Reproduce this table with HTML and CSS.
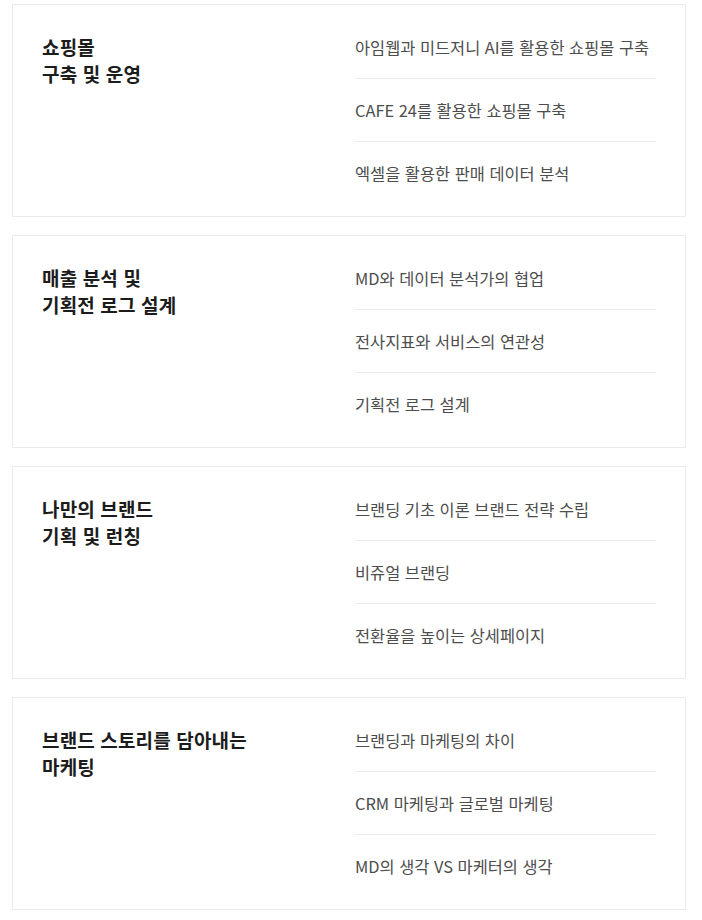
FILE: index.html
```html
<!DOCTYPE html>
<html lang="ko">
<head>
<meta charset="utf-8">
<link rel="stylesheet" href="styles.css">
</head>
<body>
<main class="curriculum">
  <section class="card">
    <h2 class="card-title">쇼핑몰<br>구축 및 운영</h2>
    <ul class="topics">
      <li>아임웹과 미드저니 AI를 활용한 쇼핑몰 구축</li>
      <li>CAFE 24를 활용한 쇼핑몰 구축</li>
      <li>엑셀을 활용한 판매 데이터 분석</li>
    </ul>
  </section>
  <section class="card">
    <h2 class="card-title">매출 분석 및<br>기획전 로그 설계</h2>
    <ul class="topics">
      <li>MD와 데이터 분석가의 협업</li>
      <li>전사지표와 서비스의 연관성</li>
      <li>기획전 로그 설계</li>
    </ul>
  </section>
  <section class="card">
    <h2 class="card-title">나만의 브랜드<br>기획 및 런칭</h2>
    <ul class="topics">
      <li>브랜딩 기초 이론 브랜드 전략 수립</li>
      <li>비쥬얼 브랜딩</li>
      <li>전환율을 높이는 상세페이지</li>
    </ul>
  </section>
  <section class="card">
    <h2 class="card-title">브랜드 스토리를 담아내는<br>마케팅</h2>
    <ul class="topics">
      <li>브랜딩과 마케팅의 차이</li>
      <li>CRM 마케팅과 글로벌 마케팅</li>
      <li>MD의 생각 VS 마케터의 생각</li>
    </ul>
  </section>
</main>
</body>
</html>
```

FILE: styles.css
```css
* { box-sizing: border-box; }
html, body { margin: 0; padding: 0; background: #fff; }
body {
  font-family: "Noto Sans CJK KR", "Noto Sans", sans-serif;
  color: #222;
}
.curriculum {
  padding: 4px 16px 0 12px;
  display: flex;
  flex-direction: column;
  gap: 18px;
}
.card {
  border: 1px solid #ebebeb;
  height: 213px;
  padding: 11px 29px 12px 29px;
  display: grid;
  grid-template-columns: 313px 1fr;
}
.card-title {
  margin: 0;
  padding-top: 17px;
  font-size: 19px;
  line-height: 27px;
  font-weight: 700;
  color: #1c1c1c;
  letter-spacing: 0.15px;
}
.topics {
  list-style: none;
  margin: 0;
  padding: 0;
}
.topics li {
  height: 62px;
  display: flex;
  align-items: center;
  font-size: 16.4px;
  color: #4d4d4d;
  letter-spacing: 0;
}
.topics li + li {
  height: 63px;
  border-top: 1px solid #ebebeb;
}
```
